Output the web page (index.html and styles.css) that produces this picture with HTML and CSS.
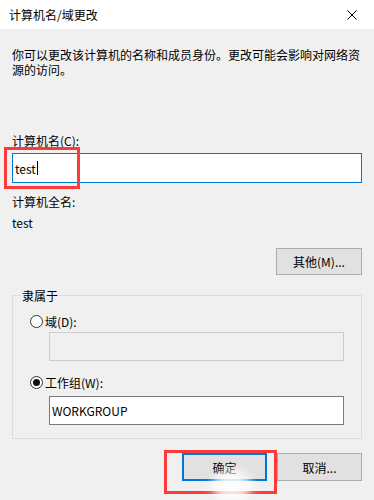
FILE: index.html
```html
<!DOCTYPE html>
<html lang="zh-CN">
<head>
<meta charset="utf-8">
<title>计算机名/域更改</title>
<link rel="stylesheet" href="styles.css">
</head>
<body>
<div class="dialog">
  <div class="titlebar">
    <span class="title">计算机名/域更改</span>
    <svg class="close" width="10" height="10" viewBox="0 0 10 10"><path d="M0.5 0.5 L9.5 9.5 M9.5 0.5 L0.5 9.5" stroke="#000" stroke-width="1" fill="none"/></svg>
  </div>
  <div class="content">
    <p class="intro">你可以更改该计算机的名称和成员身份。更改可能会影响对网络资源的访问。</p>
    <div class="label first">计算机名(C):</div>
    <div class="input focused"><span class="val">test</span><span class="caret"></span></div>
    <div class="label full">计算机全名:</div>
    <div class="label fullval">test</div>
    <div class="row more-row"><button class="btn more">其他(M)...</button></div>
    <fieldset class="group">
      <legend>隶属于</legend>
      <div class="radio-row first-radio">
        <svg class="radio" width="13" height="13" viewBox="0 0 13 13"><circle cx="6.5" cy="6.5" r="6" fill="#fff" stroke="#333" stroke-width="1"/></svg>
        <span>域(D):</span>
      </div>
      <div class="input sub disabled"></div>
      <div class="radio-row second-radio">
        <svg class="radio" width="13" height="13" viewBox="0 0 13 13"><circle cx="6.5" cy="6.5" r="6" fill="#fff" stroke="#333" stroke-width="1"/><circle cx="6.5" cy="6.5" r="3.5" fill="#111"/></svg>
        <span>工作组(W):</span>
      </div>
      <div class="input sub plain"><span class="val">WORKGROUP</span></div>
    </fieldset>
    <div class="row actions">
      <button class="btn ok">确定</button>
      <button class="btn cancel">取消...</button>
    </div>
  </div>
  <div class="mark mark-name"></div>
  <div class="mark mark-ok"></div>
  <div class="blob"></div>
</div>
</body>
</html>
```

FILE: styles.css
```css
* { box-sizing: border-box; }
html, body { margin: 0; padding: 0; }
body {
  width: 374px;
  height: 500px;
  overflow: hidden;
  background: #f0f0f0;
  font-family: "Noto Sans CJK SC", "Microsoft YaHei", sans-serif;
  font-size: 12px;
  color: #000;
}
.dialog {
  position: relative;
  width: 374px;
  height: 500px;
}
.titlebar {
  height: 29px;
  background: #fff;
  display: flex;
  align-items: center;
  justify-content: space-between;
  padding: 0 17px 0 9px;
}
.title { line-height: 15px; }
.close { display: block; margin-top: 1px; }
.content {
  padding: 0 12px;
}
.intro {
  margin: 18px 0 0 0;
  line-height: 15px;
}
.label { line-height: 15px; }
.label.first { margin-top: 56px; }
.label.full { margin-top: 11px; }
.label.fullval { margin-top: 6px; }
.input {
  background: #fff;
  display: flex;
  align-items: center;
}
.input.focused {
  margin-top: 5px;
  height: 30px;
  border: 1px solid #0078d7;
  padding-left: 2px;
}
.caret {
  display: inline-block;
  width: 1px;
  height: 14px;
  background: #000;
  margin-left: 1px;
}
.val { line-height: 15px; }
.row {
  display: flex;
  justify-content: flex-end;
}
.more-row { margin-top: 18px; }
.btn {
  font-family: inherit;
  font-size: 12px;
  color: #000;
  background: #e1e1e1;
  border: 1px solid #adadad;
  padding: 0;
  margin: 0;
  line-height: 15px;
}
.btn.more { width: 86px; height: 27px; }
.group {
  margin: 13px 0 0 0;
  padding: 0 0 13px 8px;
  border: 1px solid #dcdcdc;
  min-width: 0;
}
.group legend {
  padding: 0 1px;
  line-height: 15px;
}
.radio-row {
  display: flex;
  align-items: center;
  line-height: 15px;
  padding-left: 9px;
}
.radio { display: block; margin-right: 2px; }
.first-radio { margin-top: 11px; }
.second-radio { margin-top: 14px; }
.input.sub {
  margin-left: 28px;
  width: 295px;
  height: 29px;
}
.input.disabled {
  margin-top: 3px;
  background: #f0f0f0;
  border: 1px solid #cccccc;
}
.input.plain {
  margin-top: 6px;
  border: 1px solid #7a7a7a;
  padding-left: 2px;
}
.actions {
  margin-top: 14px;
  gap: 10px;
}
.btn.ok {
  width: 85px;
  height: 28px;
  border: 2px solid #0078d7;
}
.btn.cancel {
  width: 85px;
  height: 28px;
}
.mark {
  position: absolute;
  border: 3px solid #fb3b3b;
}
.mark-name {
  left: 4px;
  top: 147px;
  width: 76px;
  height: 42px;
}
.mark-ok {
  left: 164px;
  top: 450px;
  width: 113px;
  height: 44px;
}
.blob {
  position: absolute;
  left: 212px;
  top: 470px;
  width: 40px;
  height: 32px;
  border-radius: 50%;
  background: rgba(255,255,255,0.85);
  filter: blur(5px);
}
```
